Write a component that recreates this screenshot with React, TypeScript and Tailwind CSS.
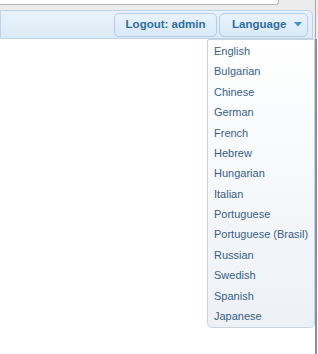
import React from 'react';

const languages = [
  'English',
  'Bulgarian',
  'Chinese',
  'German',
  'French',
  'Hebrew',
  'Hungarian',
  'Italian',
  'Portuguese',
  'Portuguese (Brasil)',
  'Russian',
  'Swedish',
  'Spanish',
  'Japanese',
];

function ToolbarButton({ className, children }: { className?: string; children: React.ReactNode }) {
  return (
    <button
      className={`h-[24px] flex items-center rounded-[5px] border border-[#b3cde4] bg-gradient-to-b from-[#e9f3fc] to-[#d9e9f7] text-[11.5px] font-bold text-[#2e6e9e] ${className ?? ''}`}
      style={{ fontFamily: '"Liberation Sans", Arial, sans-serif' }}
    >
      {children}
    </button>
  );
}

export default function App() {
  return (
    <div
      className="relative flex w-[318px] h-[354px] bg-white overflow-hidden"
      style={{ fontFamily: '"Liberation Sans", Arial, sans-serif' }}
    >
      <div className="flex flex-col w-[315px] bg-[#ececec]">
        {/* top strip */}
        <div className="h-[10px]">
          <div className="w-[279px] h-[5px] bg-white border-b border-r border-[#b4b4b4] rounded-br-[3px]" />
        </div>

        {/* toolbar */}
        <div className="h-[29px] mr-[2px] flex items-center justify-end gap-[2px] pr-[4px] rounded-tr-[5px] border border-[#bcd4ea] bg-gradient-to-b from-[#eaf3fb] to-[#dceaf6]">
          <ToolbarButton className="w-[103px] justify-center">
            Logout: admin
          </ToolbarButton>
          <ToolbarButton className="w-[89px] pl-[12px]">
            <span>Language</span>
            <svg className="ml-[8px]" width="8" height="5" viewBox="0 0 8 5">
              <path d="M0 0h8L4 4.5z" fill="#3d8fd4" />
            </svg>
          </ToolbarButton>
        </div>

        <div className="flex-1 bg-white" />
      </div>

      {/* window edge */}
      <div className="flex flex-col w-[3px]">
        <div className="h-[39px] border-l border-[#a9a9a9] bg-[#ececec]" />
        <div className="flex-1 border-l-2 border-[#7f93a8] bg-white" />
      </div>

      {/* language menu */}
      <div className="absolute left-[207px] top-[39px] w-[108px] h-[289px] pt-[1px] rounded-b-[5px] rounded-tl-[2px] border border-[#c9d3de] bg-gradient-to-b from-white to-[#edf1f6]">
        {languages.map((lang) => (
          <div key={lang} className="h-[20.4px] flex items-center pl-[6px] text-[11px] text-[#37618a] whitespace-nowrap">
            {lang}
          </div>
        ))}
      </div>
    </div>
  );
}
